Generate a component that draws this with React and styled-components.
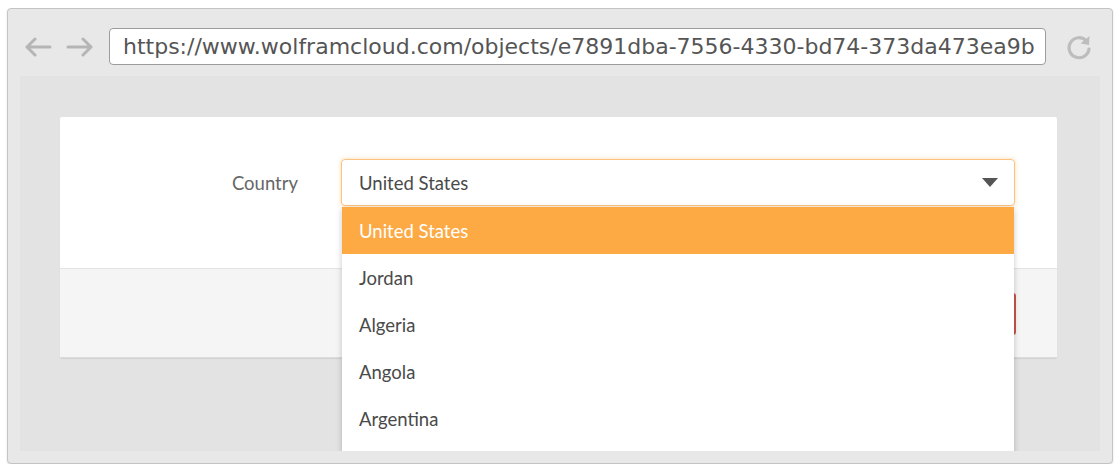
import React from 'react'
import styled, { createGlobalStyle } from 'styled-components'

const GlobalStyle = createGlobalStyle`
  html, body {
    margin: 0;
    padding: 0;
    background: #ffffff;
  }
  body {
    font-family: Lato, "Open Sans", sans-serif;
  }
`

const Window = styled.div`
  box-sizing: border-box;
  width: 1106px;
  height: 456px;
  margin: 8px 0 0 7px;
  border: 1px solid #c4c4c4;
  border-radius: 4px;
  background: #e8e8e8;
  box-shadow: 0 1px 2px rgba(0, 0, 0, 0.12);
  display: flex;
  flex-direction: column;
  padding: 0 12px 12px;
`

const Toolbar = styled.div`
  box-sizing: border-box;
  height: 67px;
  padding-top: 8px;
  display: flex;
  align-items: center;
`

const NavButton = styled.div`
  width: ${props => props.width}px;
  margin-left: ${props => props.offset}px;
  display: flex;
  align-items: center;
  justify-content: center;
  color: #b5b5b5;
`

const UrlBar = styled.div`
  box-sizing: border-box;
  width: 937px;
  height: 37px;
  margin-left: 15px;
  border: 1px solid #9c9c9c;
  border-radius: 4px;
  background: #ffffff;
  display: flex;
  align-items: center;
  padding-left: 13px;
  font-family: "DejaVu Sans", Verdana, sans-serif;
  font-size: 22px;
  color: #555555;
  white-space: nowrap;
  overflow: hidden;
`

const Viewport = styled.div`
  flex: 1;
  background: #e3e3e3;
  overflow: hidden;
  padding: 41px 43px 0 40px;
`

const Card = styled.div`
  background: #ffffff;
  border-radius: 2px;
  box-shadow: 0 1px 1px rgba(0, 0, 0, 0.08);
`

const FieldRow = styled.div`
  height: 151px;
  box-sizing: border-box;
  padding: 42px 42px 0 0;
  display: flex;
  align-items: flex-start;
`

const Label = styled.div`
  width: 238px;
  height: 47px;
  display: flex;
  align-items: center;
  justify-content: flex-end;
  margin-right: 43px;
  font-size: 18.5px;
  color: #666666;
`

const SelectWrap = styled.div`
  position: relative;
  flex: 1;
`

const SelectBox = styled.div`
  box-sizing: border-box;
  height: 47px;
  border: 1px solid #fbc283;
  border-radius: 4px;
  box-shadow: 0 0 4px rgba(255, 170, 68, 0.45);
  display: flex;
  align-items: center;
  justify-content: space-between;
  padding: 0 16px 0 17px;
  font-size: 18.5px;
  color: #4a4a4a;
`

const Caret = styled.span`
  width: 0;
  height: 0;
  border-left: 8px solid transparent;
  border-right: 8px solid transparent;
  border-top: 9px solid #555555;
`

const Menu = styled.ul`
  position: absolute;
  top: 48px;
  left: 1px;
  right: 1px;
  margin: 0;
  padding: 0 0 14px;
  list-style: none;
  background: #ffffff;
  box-shadow: 0 2px 6px rgba(0, 0, 0, 0.22);
  z-index: 2;
`

const MenuItem = styled.li`
  height: 47px;
  display: flex;
  align-items: center;
  padding-left: 17px;
  font-size: 18.5px;
  color: ${props => (props.active ? '#ffffff' : '#4a4a4a')};
  background: ${props => (props.active ? '#fdaa45' : '#ffffff')};
`

const Footer = styled.div`
  height: 90px;
  box-sizing: border-box;
  border-top: 1px solid #e4e4e4;
  border-bottom: 1px solid #dcdcdc;
  background: #f5f5f5;
  display: flex;
  justify-content: flex-end;
  padding: 24px 41px 0 0;
`

const SubmitButton = styled.button`
  width: 120px;
  height: 42px;
  border: none;
  border-radius: 3px;
  background: #c9574a;
  color: #ffffff;
  font-family: Lato, sans-serif;
  font-size: 17px;
`

const countries = ['United States', 'Jordan', 'Algeria', 'Angola', 'Argentina']

export default function App() {
  return (
    <>
      <GlobalStyle />
      <Window>
        <Toolbar>
          <NavButton width={28} offset={4}>
            <svg width="28" height="20" viewBox="0 0 28 20" fill="none" stroke="currentColor" strokeWidth="3" strokeLinecap="round" strokeLinejoin="round">
              <path d="M26 10H3M11 2L3 10l8 8" />
            </svg>
          </NavButton>
          <NavButton width={28} offset={14}>
            <svg width="28" height="20" viewBox="0 0 28 20" fill="none" stroke="currentColor" strokeWidth="3" strokeLinecap="round" strokeLinejoin="round">
              <path d="M2 10h23M17 2l8 8-8 8" />
            </svg>
          </NavButton>
          <UrlBar>https://www.wolframcloud.com/objects/e7891dba-7556-4330-bd74-373da473ea9b</UrlBar>
          <NavButton width={26} offset={20}>
            <svg width="26" height="28" viewBox="0 0 26 28" fill="none" stroke="#bdbdbd" strokeWidth="3.2" strokeLinecap="round">
              <path d="M20.5 8A10 10 0 1 0 23 16" />
              <path d="M23.5 3l-0.5 9-8.5-1.5z" fill="#bdbdbd" stroke="none" />
            </svg>
          </NavButton>
        </Toolbar>
        <Viewport>
          <Card>
            <FieldRow>
              <Label>Country</Label>
              <SelectWrap>
                <SelectBox>
                  <span>United States</span>
                  <Caret />
                </SelectBox>
                <Menu>
                  {countries.map((c, i) => (
                    <MenuItem key={c} active={i === 0}>{c}</MenuItem>
                  ))}
                </Menu>
              </SelectWrap>
            </FieldRow>
            <Footer>
              <SubmitButton>Submit</SubmitButton>
            </Footer>
          </Card>
        </Viewport>
      </Window>
    </>
  )
}
